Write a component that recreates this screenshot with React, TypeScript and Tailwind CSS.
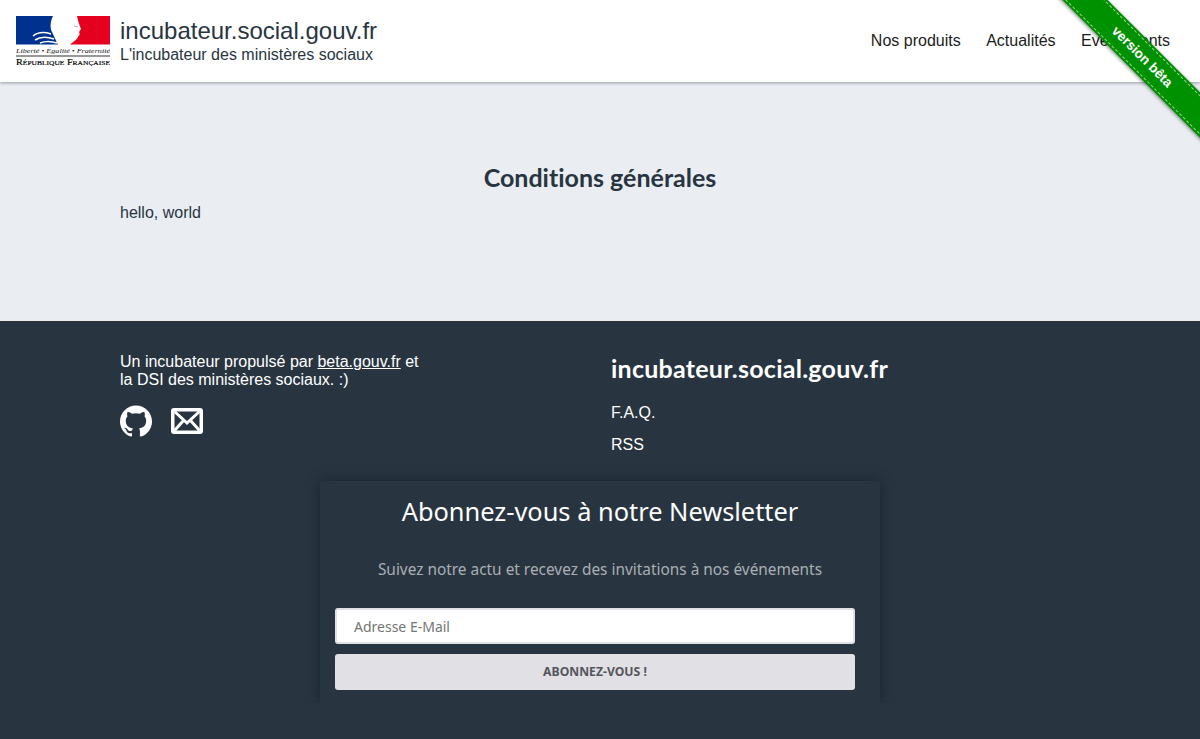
import { SiGithub } from 'react-icons/si'

const sans = "font-['Liberation_Sans',Arial,sans-serif]"
const heading = "font-['Lato',sans-serif] [font-variant-ligatures:none]"
const ubuntu = "font-['Noto_Sans',sans-serif]"

function Logo() {
  return (
    <svg width="94" height="50" viewBox="0 0 94 50" className="block shrink-0">
      <path d="M0 0H37C34 6 34 12 36 16C38 20 40 25 42 28.5H0Z" fill="#00318f" />
      <path d="M61 0H94V28.5H54C58 25 62 23 62 20.5C64 19.5 64 17.5 63 16L65 13C63 9 62 4 61 0Z" fill="#e6001f" />
      <path d="M17 20C22 16 29 16 35 18M19 24C25 20 32 21 38 23M24 27C29 25 35 25 41 27" stroke="#fff" strokeWidth="1.6" fill="none" />
      <path d="M58 10L62 11" stroke="#9aa0a8" strokeWidth="0.8" />
      <text x="0" y="37" fontSize="5.8" fontStyle="italic" fontFamily="Liberation Serif, serif" fill="#111" textLength="94" lengthAdjust="spacingAndGlyphs">
        Liberté • Égalité • Fraternité
      </text>
      <rect x="0" y="39.5" width="94" height="1" fill="#333" />
      <text x="0" y="48.5" fontSize="8.2" fontVariant="small-caps" fontFamily="Liberation Serif, serif" fill="#000" stroke="#000" strokeWidth="0.15" textLength="94" lengthAdjust="spacingAndGlyphs">
        République Française
      </text>
    </svg>
  )
}

function MailIcon() {
  return (
    <svg width="32" height="26" viewBox="0 0 32 26" className="block">
      <rect width="32" height="26" rx="3" fill="#fff" />
      <rect x="3.5" y="3.5" width="25" height="19" fill="#283541" />
      <path d="M3.5 3.5L16 15L28.5 3.5M3.5 22.5L12.5 12.5M28.5 22.5L19.5 12.5" stroke="#fff" strokeWidth="3" fill="none" />
    </svg>
  )
}

function Ribbon() {
  return (
    <div className="absolute z-20 top-0 right-0 w-[200px] h-[150px] overflow-hidden pointer-events-none">
      <div
        className={`absolute left-[-8px] top-[41px] w-[300px] h-[32px] rotate-45 bg-[#009100] shadow-[0_1px_4px_rgba(0,0,0,0.5)] flex items-center justify-center text-white text-[13.5px] font-bold ${sans}`}
      >
        <div className="absolute inset-x-0 top-[2px] border-t border-dashed border-white/60" />
        <div className="absolute inset-x-0 bottom-[2px] border-t border-dashed border-white/60" />
        version bêta
      </div>
    </div>
  )
}

export default function App() {
  return (
    <div className={`relative min-h-screen flex flex-col bg-[#283541] overflow-hidden ${sans}`}>
      <header className="relative z-10 h-[82px] bg-white shadow-[0_1px_3px_rgba(40,53,65,0.45)] flex items-center justify-between pl-4 pr-[30px]">
        <div className="flex items-center gap-[10px]">
          <Logo />
          <div className="text-[#283541] mb-[4px]">
            <div className="text-2xl leading-[30px]">incubateur.social.gouv.fr</div>
            <div className="text-base leading-[17px]">L'incubateur des ministères sociaux</div>
          </div>
        </div>
        <nav className="flex gap-[25.5px] text-base text-[#1c1c1c]">
          <a>Nos produits</a>
          <a>Actualités</a>
          <a>Evénements</a>
        </nav>
      </header>
      <Ribbon />

      <main className="h-[239px] bg-[#eaedf2] text-[#283541] pt-[80px]">
        <div className="w-[960px] mx-auto">
          <h1 className={`text-center text-[25px] leading-[30px] font-bold ${heading}`}>Conditions générales</h1>
          <p className="mt-[12px] text-base leading-[18px]">hello, world</p>
        </div>
      </main>

      <footer className="flex-1 text-white">
        <div className="w-[960px] mx-auto flex pt-[32px]">
          <div className="w-[491px]">
            <p className="w-[310px] text-base leading-[18px]">
              Un incubateur propulsé par <a className="underline">beta.gouv.fr</a> et la DSI des ministères sociaux. :)
            </p>
            <div className="flex items-center gap-[19px] mt-[16px]">
              <SiGithub size={32} />
              <MailIcon />
            </div>
          </div>
          <div>
            <h2 className={`text-[25px] leading-[30px] font-bold tracking-[0.25px] ${heading}`}>incubateur.social.gouv.fr</h2>
            <div className="mt-[21px] flex flex-col gap-[14px] text-base leading-[18px]">
              <a>F.A.Q.</a>
              <a>RSS</a>
            </div>
          </div>
        </div>

        <section className={`mx-auto mt-[27px] w-[560px] h-[222px] px-[15px] pt-[13px] bg-[#283541] rounded-t-[3px] shadow-[0_0_15px_rgba(0,0,0,0.35)] [clip-path:inset(-20px_-20px_0_-20px)] ${ubuntu}`}>
          <h3 className="text-center text-[25.4px] leading-[34px]">Abonnez-vous à notre Newsletter</h3>
          <p className="mt-[32px] text-center text-[15.4px] leading-[20px] text-[#a9aeb3]">
            Suivez notre actu et recevez des invitations à nos événements
          </p>
          <div className="mt-[28px] w-[520px] h-[36px] rounded-[3px] bg-white border-2 border-[#e0e0e5] flex items-center pl-[17px] pt-[1px] text-sm text-[#757575]">
            Adresse E-Mail
          </div>
          <button className="mt-[10px] block w-[520px] h-[36px] rounded-[3px] bg-[#e0e0e5] pt-[1px] text-[12.2px] font-bold text-[#55555d]">
            ABONNEZ-VOUS !
          </button>
        </section>
      </footer>
    </div>
  )
}
